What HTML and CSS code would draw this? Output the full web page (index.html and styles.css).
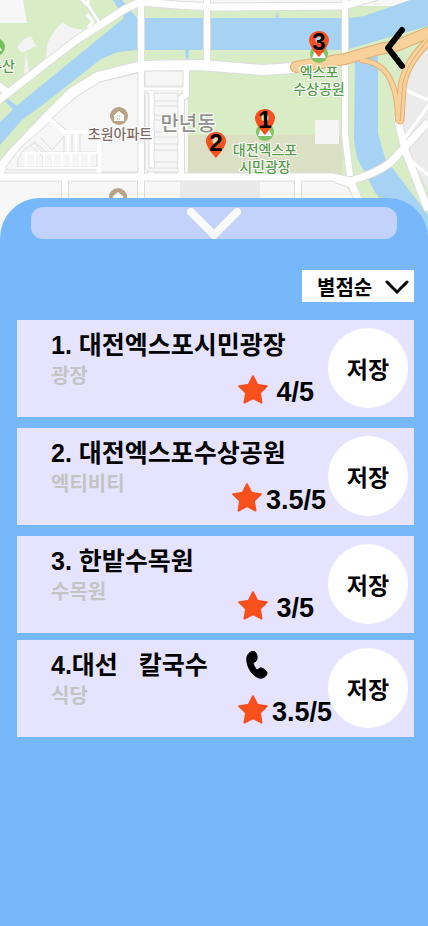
FILE: index.html
```html
<!DOCTYPE html>
<html lang="ko">
<head>
<meta charset="utf-8">
<meta name="viewport" content="width=device-width, initial-scale=1">
<title>대전 여행지</title>
<link rel="stylesheet" href="styles.css">
</head>
<body>
<svg class="defs" aria-hidden="true">
  <symbol id="star" viewBox="0 0 30 29"><path d="M15 1.200 19.300 9.800 28.800 11.200 21.900 17.900 23.500 27.500 15 23 6.500 27.500 8.100 17.900 1.200 11.200 10.700 9.800Z" fill="#f9501e" stroke="#f9501e" stroke-width="2" stroke-linejoin="round"/></symbol>
  <symbol id="pin" viewBox="5 2 14 20" preserveAspectRatio="none"><path fill="#f9501e" fill-rule="evenodd" d="M12 2C8.13 2 5 5.13 5 9c0 5.25 7 13 7 13s7-7.75 7-13c0-3.87-3.13-7-7-7Zm0 9.500a2.500 2.500 0 0 1 0-5 2.500 2.500 0 0 1 0 5Z"/></symbol>
</svg>
<header class="map">
  <svg class="map__art" viewBox="0 0 428 240" preserveAspectRatio="xMidYMin slice" role="img" aria-label="지도">
    <rect width="428" height="240" fill="#f7f7f7"/>
    <g fill="#d8ecc6">
      <path d="M23 0H140L98 26 40 72 12 90H0V23H27Z"/>
      <path d="M0 104 75 45 138 6H428V240H340V70H188V70L140 68 100 79 48 120 0 168Z"/>
      <path d="M188 70H345V140H188Z"/>
    </g>
    <path d="M12 88 20 78 45 60 48 42 53 33 62 22 70 27 82 30 90 26 50 64 20 88Z" fill="#f3f3f3"/>
    <path d="M17 47 24 39 31 36 36 46 22 53ZM26 52 29 72 24 74Z" fill="#f4f4f4" stroke="#e9eadf" stroke-width=".6"/>
    <path d="M188 135H342V175H188Z" fill="#dbdfc4"/>
    <path d="M315 120H339V144H315Z" fill="#f5f5f5"/>
    <path d="M180 182H260V200H180Z" fill="#e9e9e9"/>
    <path d="M261 182H342L356 200H261Z" fill="#f7f7f7"/>
    <g fill="#a6d2f3">
      <path d="M0 122 20 103 124 18 113 0H122L137 18H350L364 16 393 6 410 0H428V26L345 50H138L118 52 101 59 40 107 22 120 0 145Z"/>
      <path d="M8 99 18 107 14 111 5 101ZM185 49H189L188 60H186ZM276 19 277 11 279 19Z"/>
      <path d="M355 55H378V133L385 158 428 215V240H410L375 192 357 158 354 140Z"/>
    </g>
    <path d="M428 36 410 68 403 92 403 138 414 164 428 190Z" fill="#ebebeb"/>
    <g fill="none" stroke-linejoin="round">
      <g stroke="#dedede">
        <path stroke-width="9" d="M-5 103 12 90 75 41 125 9 140 2 178 5 214 7 344 6 378-4M-4 84 10 94"/>
        <path stroke-width="12" d="M-5 176 10 157 48 117 72 93 98 77 141 66 200 65 262 70 295 68"/>
        <path stroke-width="8" d="M141 0V200M207 0V65M345 0V135L350 176M186 70V95L181 98V175M65 178V200M298 178V200M151 92V175"/>
        <path stroke-width="9" d="M0 177H332L350 181Q375 174 390 163L407 145 428 122M397 116 405 150 428 210"/>
        <path stroke-width="9" d="M336 179 352 184 358 200"/>
        <path stroke-width="4" d="M80-2 88 5 100 24M144 89H185"/>
      </g>
      <g stroke="#fff">
        <path stroke-width="7" d="M-5 103 12 90 75 41 125 9 140 2 178 5 214 7 344 6 378-4M-4 84 10 94"/>
        <path stroke-width="10" d="M-5 176 10 157 48 117 72 93 98 77 141 66 200 65 262 70 295 68"/>
        <path stroke-width="6" d="M141 0V200M207 0V65M345 0V135L350 176M186 70V95L181 98V175M65 178V200M298 178V200M151 92V175"/>
        <path stroke-width="7" d="M0 177H332L350 181Q375 174 390 163L407 145 428 122M397 116 405 150 428 210M336 179 352 184 358 200"/>
        <path stroke-width="3" d="M80-2 88 5 100 24M144 89H185M87 14 93 22 88 27M88 0V4M405 90 428 100M405 138 428 106M410 160 428 175"/>
      </g>
      <g fill="#f6f6f6" stroke="#dedede">
        <path d="M145 71H183V86H145ZM154 93H178V101H154ZM154 106H178V115H154ZM154 120H178V132H154ZM154 137H178V144H154ZM154 150H178V162H154Z"/>
        <path d="M145 93H149V168H178V172H148L145 168Z"/>
        <path d="M6 167 20 148 51 121 64 133H98V170H12Q4 170 6 167Z"/>
        <path d="M100 82 138 73V172H100V133H70L52 118 76 97Z"/>
      </g>
      <path stroke="#fff" stroke-width="4" d="M51 120 64 132H99M99 132V173"/>
      <path stroke="#dedede" d="M18 167V159L24 150 34 143 42 152H97V167ZM30 145 43 157V167M34 141 48 154M40 137 52 150 64 136V152M72 134V152M80 134V152"/>
      <path stroke="#fff" stroke-width="2" d="M16 168H98M26 153V167M35 153V167M44 153V167M53 153V167M62 153V167M71 153V167M80 153V167M89 153V167M22 153H98M68 134V153M76 134V153"/>
      <g stroke="#e2ae77">
        <path stroke-width="6" d="M360 60Q382 62 390 79 398 94 398 122"/>
        <path stroke-width="9" d="M432 38Q405 62 402 88L400 120" stroke-linecap="round"/>
        <path stroke-width="12" d="M296 67 345 59 380 49 396 46 432 31" stroke-linecap="round"/>
      </g>
      <g stroke="#f8d099">
        <path stroke-width="4" d="M360 60Q382 62 390 79 398 94 398 122"/>
        <path stroke-width="7" d="M432 38Q405 62 402 88L400 120" stroke-linecap="round"/>
        <path stroke-width="10" d="M296 67 345 59 380 49 396 46 432 31" stroke-linecap="round"/>
      </g>
      <path stroke="#e2ae77" d="M428 40Q408 62 403 82L400 122"/>
    </g>
    <g>
      <circle cx="119" cy="116" r="9" fill="#b9a286"/>
      <path d="M113 116 119 111 125 116H124V121H114V116Z" fill="#fff"/>
      <path d="M117 116H121M117 119H121" stroke="#b9a286" stroke-dasharray="1 1"/>
      <circle cx="118" cy="197" r="9" fill="#b9a286"/>
      <path d="M112 197 118 192 124 197H123V203H113V197Z" fill="#fff"/>
      <circle cx="-4" cy="47" r="9" fill="#75c05b"/>
      <path d="M-6 51-2 43 2 51Z" fill="#fff"/>
      <circle cx="319" cy="54" r="9" fill="#80c565"/>
      <path d="M312 58 315 50 318 56 322 50 326 58Z" fill="#fff"/>
      <circle cx="265" cy="132" r="9" fill="#80c565"/>
      <path d="M258 136 261 128 264 134 268 128 272 136Z" fill="#fff"/>
    </g>
    <g class="map__label">
      <text x="188" y="131" class="map__label--district">만년동</text>
      <text x="120" y="139" class="map__label--home">초원아파트</text>
      <text x="265" y="155">대전엑스포</text>
      <text x="265" y="172">시민광장</text>
      <text x="319" y="77">엑스포</text>
      <text x="319" y="94">수상공원</text>
      <text x="2" y="71">우산</text>
    </g>
    <g class="map__pin">
      <use href="#pin" x="255" y="109" width="20" height="26"/>
      <text x="265" y="128">1</text>
      <use href="#pin" x="206" y="132" width="20" height="26"/>
      <text x="216" y="151">2</text>
      <use href="#pin" x="309" y="31" width="20" height="26"/>
      <text x="319" y="50">3</text>
    </g>
  </svg>
  <button class="back" type="button" aria-label="뒤로">
    <svg width="22" height="44" viewBox="0 0 22 44"><path d="M18 4 4 22 18 40" fill="none" stroke="#000" stroke-width="6" stroke-linecap="round" stroke-linejoin="round"/></svg>
  </button>
</header>
<main class="sheet">
  <button class="handle" type="button" aria-label="목록 닫기">
    <svg width="54" height="32" viewBox="0 0 54 32"><path d="M4 5 27 28 50 5" fill="none" stroke="#fafafa" stroke-width="8" stroke-linecap="round"/></svg>
  </button>
  <div class="sort">
    <select class="sort__select" aria-label="정렬">
      <option>별점순</option>
    </select>
    <svg class="sort__arrow" width="24" height="14" viewBox="0 0 24 14"><path d="M2 2 12 12 22 2" fill="none" stroke="#000" stroke-width="3" stroke-linecap="round"/></svg>
  </div>
  <ul class="list">
    <li class="card">
      <div class="card__head"><h2 class="card__title">1. 대전엑스포시민광장</h2></div>
      <p class="card__kind">광장</p>
      <p class="rating"><svg class="rating__star"><use href="#star"/></svg>4/5</p>
      <button class="save" type="button">저장</button>
    </li>
    <li class="card">
      <div class="card__head"><h2 class="card__title">2. 대전엑스포수상공원</h2></div>
      <p class="card__kind">엑티비티</p>
      <p class="rating rating--half"><svg class="rating__star"><use href="#star"/></svg>3.5/5</p>
      <button class="save" type="button">저장</button>
    </li>
    <li class="card">
      <div class="card__head"><h2 class="card__title">3. 한밭수목원</h2></div>
      <p class="card__kind">수목원</p>
      <p class="rating"><svg class="rating__star"><use href="#star"/></svg>3/5</p>
      <button class="save" type="button">저장</button>
    </li>
    <li class="card card--call">
      <div class="card__head">
        <h2 class="card__title">4.대선   칼국수</h2>
        <a class="call" href="#call" aria-label="전화 걸기">
          <svg width="22" height="28" viewBox="0 0 22 28"><path d="M5 1C2 2 0 6 1 11 2 18 7 25 13 27 17 28 21 25 21 22 21 20 16 16 14 17L11 19C9 17 8 15 7 12L10 10C12 8 11 2 9 1 8 0 6 0 5 1Z" stroke="#000" stroke-linejoin="round"/></svg>
        </a>
      </div>
      <p class="card__kind">식당</p>
      <p class="rating rating--half"><svg class="rating__star"><use href="#star"/></svg>3.5/5</p>
      <button class="save" type="button">저장</button>
    </li>
  </ul>
</main>
</body>
</html>
```
FILE: styles.css
```css
* {
  box-sizing: border-box;
}

body {
  margin: 0;
  min-height: 100vh;
  display: flex;
  flex-direction: column;
  background: #76b8f9;
  color: #000;
  font-family: "Liberation Sans", "Noto Sans CJK KR", sans-serif;
  font-weight: 700;
}

button,
select {
  margin: 0;
  padding: 0;
  border: 0;
  color: inherit;
  font: inherit;
  cursor: pointer;
}

svg {
  display: block;
}

.defs {
  position: absolute;
  width: 0;
  height: 0;
}

.map {
  position: relative;
  height: 240px;
}

.map__art {
  width: 100%;
  height: 100%;
}

.map__label {
  fill: #559b49;
  stroke: #fff;
  stroke-width: 2px;
  paint-order: stroke;
  font-size: 14px;
  font-weight: 500;
  text-anchor: middle;
}

.map__label--home {
  fill: #7d6c65;
}

.map__label--district {
  fill: #92928e;
  font-size: 20px;
}

.map__pin {
  font-size: 24px;
  text-anchor: middle;
}

.back {
  position: absolute;
  top: 26px;
  right: 22px;
  background: none;
}

.sheet {
  position: relative;
  flex: 1;
  margin-top: -42px;
  padding: 9px 14px 24px 17px;
  display: flex;
  flex-direction: column;
  border-radius: 40px 40px 0 0;
  background: #76b8f9;
}

.handle {
  height: 32px;
  margin: 0 17px 0 14px;
  display: flex;
  justify-content: center;
  border-radius: 12px;
  background: #c3d2fa;
}

.sort {
  position: relative;
  width: 112px;
  margin: 31px 0 18px;
  align-self: flex-end;
}

.sort__select {
  display: block;
  width: 100%;
  height: 32px;
  padding-left: 15px;
  appearance: none;
  border-radius: 0;
  background: #fff;
  font-family: "Noto Sans CJK KR", sans-serif;
  font-size: 20px;
}

.sort__arrow {
  position: absolute;
  top: 10px;
  right: 5px;
  pointer-events: none;
}

.list {
  margin: 0;
  padding: 0;
  list-style: none;
}

.card {
  display: grid;
  grid-template-columns: auto 1fr 80px;
  grid-template-rows: 34px 1fr;
  min-height: 97px;
  padding: 8px 6px 9px 34px;
  background: #e6e3ff;
}

.card + .card {
  margin-top: 11px;
}

.card + .card--call {
  margin-top: 7px;
}

.card__head {
  grid-column: 1 / 3;
  display: flex;
  align-items: center;
  gap: 38px;
}

.card__title {
  margin: 0;
  font-size: 25px;
  font-weight: 700;
  line-height: 36px;
  white-space: pre;
}

.call {
  color: inherit;
}

.card__kind {
  grid-column: 1;
  grid-row: 2;
  margin: 2px 0 0;
  color: #c4c4c4;
  font-size: 20px;
  line-height: 24px;
}

.rating {
  grid-column: 2;
  grid-row: 2;
  align-self: end;
  justify-self: end;
  display: flex;
  align-items: center;
  gap: 8px;
  margin: 0;
  padding-right: 14px;
  font-size: 27px;
  line-height: 30px;
  white-space: nowrap;
}

.rating--half {
  gap: 4px;
  padding-right: 2px;
}

.card--call .rating {
  position: relative;
  z-index: 1;
  margin-right: -4px;
  padding-right: 0;
}

.rating__star {
  width: 30px;
  height: 29px;
  margin-bottom: 4px;
}

.save {
  grid-column: 3;
  grid-row: 1 / 3;
  width: 80px;
  height: 80px;
  border-radius: 50%;
  background: #fff;
  font-family: "Noto Sans CJK KR", sans-serif;
  font-size: 23px;
}
```
